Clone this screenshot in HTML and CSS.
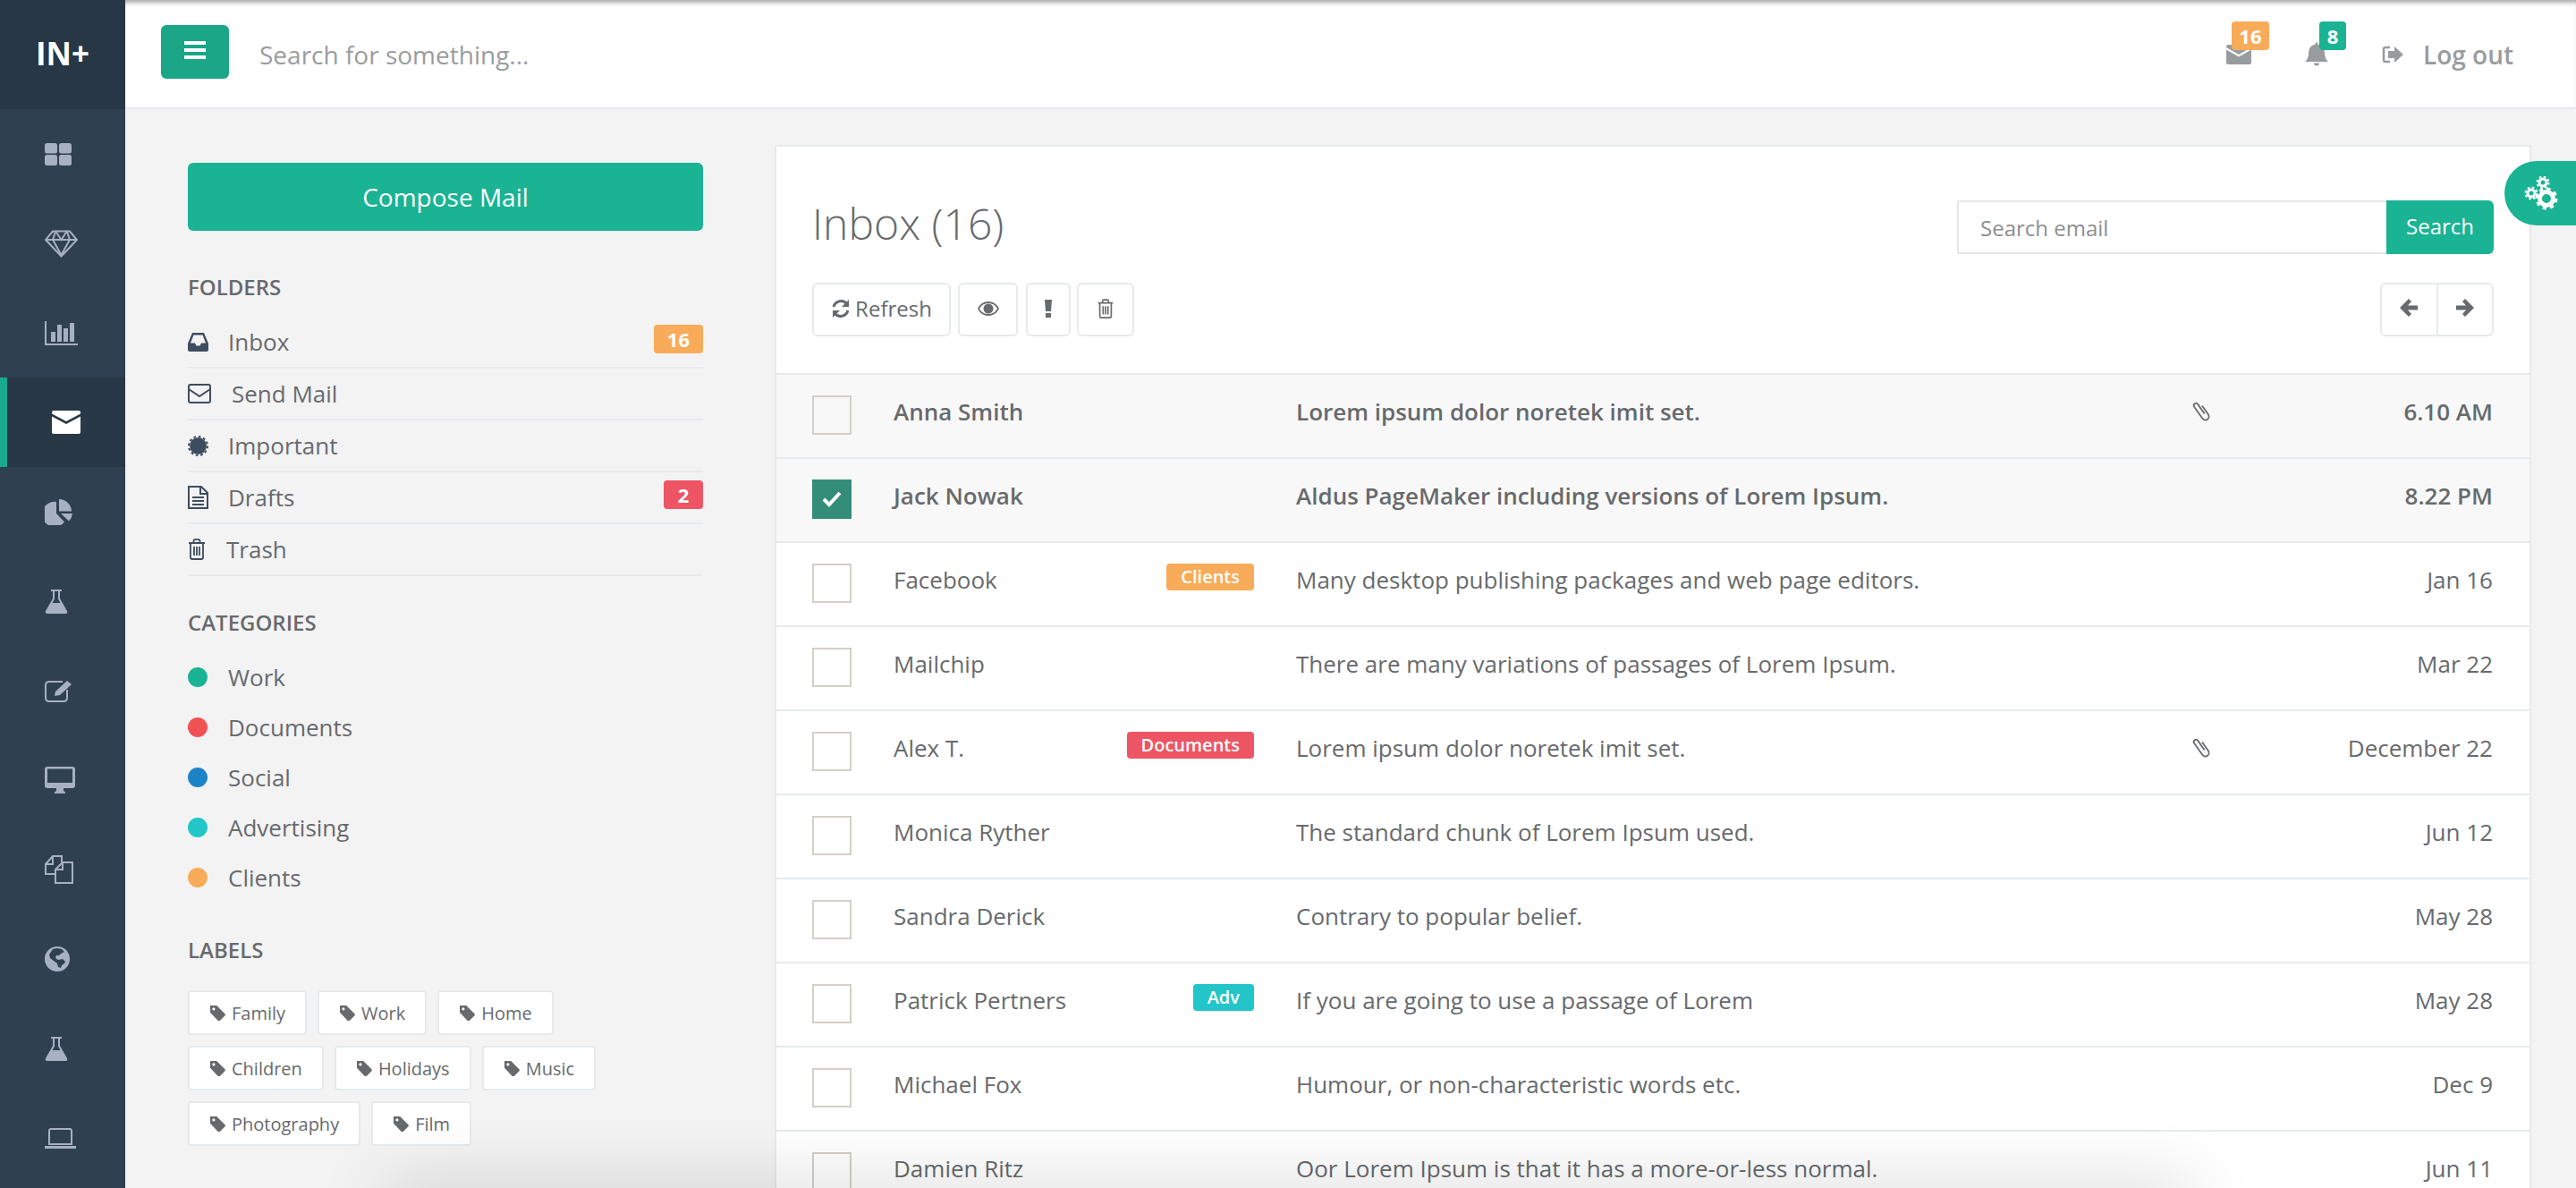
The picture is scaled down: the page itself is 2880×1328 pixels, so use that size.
FILE: index.html
```html
<!DOCTYPE html>
<html lang="en">

<head>
    <meta charset="UTF-8">
    <title>INSPINIA | Mailbox</title>
    <link rel="stylesheet" href="styles.css">
</head>

<body>
    <svg class="defs" width="0" height="0">
        <symbol id="i-tag" viewBox="1 1 16.500 16.500"><path d="M1 1h7l9 9a1.500 1.500 0 0 1 0 2l-5.500 5.500a1.500 1.500 0 0 1-2 0L1 8.500z M4.800 3.300a1.500 1.500 0 1 0 .01 0z" fill-rule="evenodd" fill="currentColor"/></symbol>
        <symbol id="i-trash" viewBox="0 0 20 24"><path d="M1 5h18M6.500 5V2.500q0-1.300 1.300-1.300h4.400q1.300 0 1.300 1.300V5M3 5v16q0 2 2 2h10q2 0 2-2V5M7 9v10M10 9v10M13 9v10" fill="none" stroke="currentColor" stroke-width="1.800"/></symbol>
        <symbol id="i-clip" viewBox="0 0 22 24"><path transform="rotate(-35 11 12)" d="M15 8V20a4 4 0 0 1-8 0V4a2.500 2.500 0 0 1 5 0V17" fill="none" stroke="currentColor" stroke-width="1.800"/></symbol>
        <symbol id="i-flask" viewBox="0 0 26 28"><path d="M7 1h12v2h-2v8l8 14q1 3-2 3H3q-3 0-2-3l8-14V3H7zM11 3v8.500L8.500 16h9L15 11.500V3z" fill-rule="evenodd" fill="currentColor"/></symbol>
    </svg>

    <nav class="sidebar">
        <div class="logo">IN+</div>
        <a class="nav-item"><svg class="ni" width="30" height="25" viewBox="0 0 30 25" fill="currentColor"><rect width="14" height="11.500" rx="2.500"/><rect x="16" width="14" height="11.500" rx="2.500"/><rect y="13" width="14" height="12" rx="2.500"/><rect x="16" y="13" width="14" height="12" rx="2.500"/></svg></a>
        <a class="nav-item"><svg class="ni" width="37" height="31" viewBox="0 0 37 31" fill="none" stroke="currentColor" stroke-width="2"><path d="M9 1.500h19l8 9.500-17.500 18.500L1 11zM1 11h35M12 2l-3 9 9.500 17M25 2l3 9-9.500 17M12.500 2 18.500 11 24.500 2"/></svg></a>
        <a class="nav-item"><svg class="ni" width="37" height="27" viewBox="0 0 37 27" fill="currentColor"><path d="M0 0h2v25h35v2H0z"/><rect x="7" y="12" width="5" height="11"/><rect x="14" y="4" width="5" height="19"/><rect x="21" y="8" width="5" height="15"/><rect x="28" y="2" width="5" height="21"/></svg></a>
        <a class="nav-item active"><svg width="32" height="26" viewBox="0 0 32 26" fill="currentColor"><path d="M2 0h28q2 0 2 2v1.500L16 12 0 3.500V2q0-2 2-2z"/><path d="M0 6.500 16 15 32 6.500V24q0 2-2 2H2q-2 0-2-2z"/></svg></a>
        <a class="nav-item"><svg class="ni" width="31" height="29" viewBox="0 0 31 29" fill="currentColor"><path d="M13 3v13l9 9.500A14 14 0 1 1 13 3z"/><path d="M16 0a14 14 0 0 1 14 13.500H16z"/><path d="M18 16h13a14 14 0 0 1-4 8.500z"/></svg></a>
        <a class="nav-item"><svg class="ni flask" width="26" height="28"><use href="#i-flask"/></svg></a>
        <a class="nav-item"><svg class="ni" width="32" height="25" viewBox="0 0 32 25" fill="none" stroke="currentColor" stroke-width="2"><path d="M25 11v9q0 4-4 4H5q-4 0-4-4V6q0-4 4-4h15"/><path d="M11 18l1-5L25 1l5 4-13 12z" fill="currentColor" stroke="none"/></svg></a>
        <a class="nav-item"><svg class="ni" width="34" height="30" viewBox="0 0 34 30" fill="currentColor"><path d="M3 0h28q3 0 3 3v18q0 3-3 3H21v3l2 1.500V30H11v-1.500l2-1.500v-3H3q-3 0-3-3V3q0-3 3-3zM3 2.500V18h28V2.500z" fill-rule="evenodd"/></svg></a>
        <a class="nav-item"><svg class="ni" width="32" height="32" viewBox="0 0 32 32" fill="none" stroke="currentColor" stroke-width="2"><path d="M12 21H1V10l8-9h10v7"/><path d="M9 1v9H1"/><path d="M20 8h11v23H12V16z"/><path d="M20 8v8h-8"/></svg></a>
        <a class="nav-item"><svg class="ni" width="28" height="28" viewBox="0 0 28 28"><circle cx="14" cy="14" r="14" fill="currentColor"/><path d="M9 3l5-1 5 1 3 3-4 2-2 2h-3l-1 3 3 2 5-1 3 3-1 2-3 2-1 3-3-1-1-4-4-3-4-3-1-4z" fill="#2f4050"/></svg></a>
        <a class="nav-item"><svg class="ni flask" width="26" height="28"><use href="#i-flask"/></svg></a>
        <a class="nav-item"><svg class="ni" width="35" height="23" viewBox="0 0 35 23" fill="none" stroke="currentColor" stroke-width="2"><path d="M5 18V3q0-2 2-2h21q2 0 2 2v15z"/><path d="M0 21.500h35" stroke-width="3"/></svg></a>
    </nav>

    <div class="main">
        <header class="topbar">
            <button class="menu-btn"><svg width="24" height="20" viewBox="0 0 24 20" fill="#fff"><rect width="24" height="4"/><rect y="8" width="24" height="4"/><rect y="16" width="24" height="4"/></svg></button>
            <div class="top-search">Search for something...</div>
            <div class="top-right">
                <span class="top-icon mail">
                    <svg width="28" height="22" viewBox="0 0 28 22" fill="currentColor"><path d="M2 0h24q2 0 2 2v1L14 11 0 3V2q0-2 2-2z"/><path d="M0 5.500 14 13.500 28 5.500V20q0 2-2 2H2q-2 0-2-2z"/></svg>
                    <b class="count orange">16</b>
                </span>
                <span class="top-icon bell">
                    <svg width="26" height="28" viewBox="0 0 26 28" fill="currentColor"><path d="M13 0q1.500 0 1.500 2.500Q22 4 22 12q0 7 4 10H0q4-3 4-10Q4 4 11.500 2.500 11.500 0 13 0zM10 23.500h6a3 3 0 0 1-6 0z"/></svg>
                    <b class="count green">8</b>
                </span>
                <span class="logout">
                    <svg width="24" height="20" viewBox="0 0 24 20" fill="currentColor"><path d="M9 2H4Q2 2 2 4v12q0 2 2 2h5" fill="none" stroke="currentColor" stroke-width="2.500"/><path d="M14 1l10 9-10 9v-5H7V6h7z"/></svg>
                    Log out
                </span>
            </div>
        </header>

        <div class="content">
            <aside class="mail-side">
                <button class="compose">Compose Mail</button>

                <h5 class="side-title first">FOLDERS</h5>
                <ul class="folders">
                    <li><svg class="fi" width="23" height="21" viewBox="0 0 23 21" fill="#3e4d5f"><path d="M5 0h13l5 12v7q0 2-2 2H2q-2 0-2-2v-7zM6.500 2.500 3 11.500h5l1.500 3h4l1.500-3h5L16.500 2.500z" fill-rule="evenodd"/></svg><span class="t1">Inbox</span><b class="badge orange">16</b></li>
                    <li><svg class="fi" width="26" height="22" viewBox="0 0 26 22" fill="none" stroke="#3e4d5f" stroke-width="2"><rect x="1" y="1" width="24" height="20" rx="2"/><path d="M1 6l12 8 12-8"/></svg><span class="t2">Send Mail</span></li>
                    <li><svg class="fi" width="23" height="23" viewBox="0 0 23 23" fill="#3e4d5f" stroke="#3e4d5f"><circle cx="11.500" cy="11.500" r="9.500" stroke="none"/><circle cx="11.500" cy="11.500" r="10.500" fill="none" stroke-width="2" stroke-dasharray="2.750"/></svg><span class="t1">Important</span></li>
                    <li><svg class="fi" width="23" height="26" viewBox="0 0 23 26" fill="none" stroke="#3e4d5f" stroke-width="2"><path d="M1 1h14l7 7v17H1zM14 1v8h8M5 13h13M5 17h13M5 21h13"/></svg><span class="t1">Drafts</span><b class="badge red">2</b></li>
                    <li><svg class="fi" width="20" height="24" viewBox="0 0 20 24" color="#3e4d5f"><use href="#i-trash"/></svg><span class="t3">Trash</span></li>
                </ul>

                <h5 class="side-title">CATEGORIES</h5>
                <ul class="cats">
                    <li><i class="dot navy"></i>Work</li>
                    <li><i class="dot red-dot"></i>Documents</li>
                    <li><i class="dot blue"></i>Social</li>
                    <li><i class="dot cyan"></i>Advertising</li>
                    <li><i class="dot amber"></i>Clients</li>
                </ul>

                <h5 class="side-title">LABELS</h5>
                <div class="tags">
                    <a class="tag"><svg width="17" height="17"><use href="#i-tag"/></svg>Family</a>
                    <a class="tag"><svg width="17" height="17"><use href="#i-tag"/></svg>Work</a>
                    <a class="tag"><svg width="17" height="17"><use href="#i-tag"/></svg>Home</a>
                    <a class="tag"><svg width="17" height="17"><use href="#i-tag"/></svg>Children</a>
                    <a class="tag"><svg width="17" height="17"><use href="#i-tag"/></svg>Holidays</a>
                    <a class="tag"><svg width="17" height="17"><use href="#i-tag"/></svg>Music</a>
                    <a class="tag"><svg width="17" height="17"><use href="#i-tag"/></svg>Photography</a>
                    <a class="tag"><svg width="17" height="17"><use href="#i-tag"/></svg>Film</a>
                </div>
            </aside>

            <section class="inbox">
                <div class="inbox-head">
                    <div class="head-row">
                        <h2>Inbox (16)</h2>
                        <div class="mail-search">
                            <div class="mail-input">Search email</div>
                            <button class="mail-btn">Search</button>
                        </div>
                    </div>
                    <div class="tools">
                        <button class="tool"><svg width="22" height="22" viewBox="0 0 22 22" fill="none" stroke="currentColor" stroke-width="3"><path d="M3 9a8.500 8.500 0 0 1 15-3M19 13a8.500 8.500 0 0 1-15 3"/><path d="M20 1v8h-8zM2 21v-8h8z" fill="currentColor" stroke="none"/></svg>Refresh</button>
                        <button class="tool eye"><svg width="24" height="16" viewBox="0 0 24 16"><path d="M12 0q8 0 12 8-4 8-12 8T0 8q4-8 12-8zM12 2Q5 2 2 8q3 6 10 6t10-6q-3-6-10-6z" fill="currentColor" fill-rule="evenodd"/><circle cx="12" cy="8" r="5.500" fill="currentColor"/></svg></button>
                        <button class="tool bang"><svg width="8" height="20" viewBox="0 0 8 20" fill="currentColor"><path d="M0 0h8L7 13H1z"/><rect x="1" y="15" width="6" height="5"/></svg></button>
                        <button class="tool bin"><svg width="20" height="22" viewBox="0 0 20 24"><use href="#i-trash"/></svg></button>
                        <div class="pager">
                            <button><svg width="20" height="20" viewBox="0 0 20 20" fill="currentColor"><path d="M10 0l3 3-4 4.500h11v5H9l4 4.500-3 3L0 10z"/></svg></button>
                            <button><svg width="20" height="20" viewBox="0 0 20 20" fill="currentColor"><path d="M10 0l-3 3 4 4.500H0v5h11l-4 4.500 3 3 10-10z"/></svg></button>
                        </div>
                    </div>
                </div>
                <div class="rows">
                    <div class="row unread">
                        <span class="check"></span><span class="from">Anna Smith</span><span class="lbl"></span>
                        <span class="subj">Lorem ipsum dolor noretek imit set.</span>
                        <svg class="clip" width="22" height="24"><use href="#i-clip"/></svg><span class="date">6.10 AM</span>
                    </div>
                    <div class="row unread">
                        <span class="check on"><svg width="22" height="18" viewBox="0 0 22 18" fill="none" stroke="#fff" stroke-width="4"><path d="M2 9l6 6L20 2"/></svg></span><span class="from">Jack Nowak</span><span class="lbl"></span>
                        <span class="subj">Aldus PageMaker including versions of Lorem Ipsum.</span>
                        <span class="date">8.22 PM</span>
                    </div>
                    <div class="row">
                        <span class="check"></span><span class="from">Facebook</span><span class="lbl"><b class="tagl orange">Clients</b></span>
                        <span class="subj">Many desktop publishing packages and web page editors.</span>
                        <span class="date">Jan 16</span>
                    </div>
                    <div class="row">
                        <span class="check"></span><span class="from">Mailchip</span><span class="lbl"></span>
                        <span class="subj">There are many variations of passages of Lorem Ipsum.</span>
                        <span class="date">Mar 22</span>
                    </div>
                    <div class="row">
                        <span class="check"></span><span class="from">Alex T.</span><span class="lbl"><b class="tagl red">Documents</b></span>
                        <span class="subj">Lorem ipsum dolor noretek imit set.</span>
                        <svg class="clip" width="22" height="24"><use href="#i-clip"/></svg><span class="date">December 22</span>
                    </div>
                    <div class="row">
                        <span class="check"></span><span class="from">Monica Ryther</span><span class="lbl"></span>
                        <span class="subj">The standard chunk of Lorem Ipsum used.</span>
                        <span class="date">Jun 12</span>
                    </div>
                    <div class="row">
                        <span class="check"></span><span class="from">Sandra Derick</span><span class="lbl"></span>
                        <span class="subj">Contrary to popular belief.</span>
                        <span class="date">May 28</span>
                    </div>
                    <div class="row">
                        <span class="check"></span><span class="from">Patrick Pertners</span><span class="lbl"><b class="tagl cyan-l">Adv</b></span>
                        <span class="subj">If you are going to use a passage of Lorem</span>
                        <span class="date">May 28</span>
                    </div>
                    <div class="row">
                        <span class="check"></span><span class="from">Michael Fox</span><span class="lbl"></span>
                        <span class="subj">Humour, or non-characteristic words etc.</span>
                        <span class="date">Dec 9</span>
                    </div>
                    <div class="row">
                        <span class="check"></span><span class="from">Damien Ritz</span><span class="lbl"></span>
                        <span class="subj">Oor Lorem Ipsum is that it has a more-or-less normal.</span>
                        <span class="date">Jun 11</span>
                    </div>
                </div>
            </section>
        </div>
    </div>

    <div class="gear-tab">
        <svg width="40" height="38" viewBox="0 0 40 38" fill="none" stroke="#fff">
            <circle cx="25" cy="25" r="7.500" stroke-width="5"/>
            <circle cx="25" cy="25" r="11" stroke-width="3" stroke-dasharray="4.320"/>
            <circle cx="21" cy="7" r="4" stroke-width="3"/>
            <circle cx="21" cy="7" r="6.500" stroke-width="2" stroke-dasharray="2.550"/>
            <circle cx="8" cy="19" r="4" stroke-width="3"/>
            <circle cx="8" cy="19" r="6.500" stroke-width="2" stroke-dasharray="2.550"/>
        </svg>
    </div>
    <div class="bottom-shade"></div>
</body>

</html>
```
FILE: styles.css
```css
* {
    box-sizing: border-box;
}

html,
body {
    height: 100%;
    margin: 0;
    overflow: hidden;
}

body {
    display: flex;
    background-color: #f3f3f4;
    color: #676a6c;
    font-family: "Open Sans", "Liberation Sans", sans-serif;
    font-size: 26px;
}

.defs {
    position: absolute;
}

button {
    font-family: inherit;
    border: none;
    padding: 0;
}

/* sidebar */
.sidebar {
    width: 140px;
    flex-shrink: 0;
    background-color: #2f4050;
    color: #a7b1c2;
}

.logo {
    height: 122px;
    padding-left: 40px;
    padding-top: 33px;
    background-color: #283745;
    color: #fff;
    font-size: 35px;
    font-weight: 700;
    line-height: 54px;
}

.nav-item {
    height: 100px;
    display: flex;
    align-items: center;
    padding-left: 50px;
}

.nav-item.active {
    background-color: #293846;
    border-left: 8px solid #19aa8d;
    color: #fff;
}

/* top bar */
.main {
    flex: 1;
    min-width: 0;
}

.topbar {
    height: 122px;
    display: flex;
    align-items: center;
    padding: 0 70px 4px 40px;
    background-color: #fff;
    border-bottom: 2px solid #e7eaec;
    box-shadow: inset 0 6px 5px -3px #aaa;
}

.menu-btn {
    width: 76px;
    height: 60px;
    background-color: #1aa687;
    border-radius: 6px;
}

.top-search {
    margin-left: 34px;
    margin-top: 5px;
    color: #999c9e;
    font-size: 28px;
}

.top-right {
    margin-left: auto;
    margin-top: 5px;
    display: flex;
    align-items: center;
    color: #999c9e;
}

.top-icon {
    position: relative;
    display: flex;
}

.mail {
    margin-right: 60px;
}

.bell {
    margin-right: 60px;
}

.count {
    position: absolute;
    top: -26px;
    height: 32px;
    border-radius: 4px;
    color: #fff;
    font-size: 22px;
    font-weight: 700;
    line-height: 32px;
    text-align: center;
}

.mail .count {
    left: 6px;
    width: 42px;
}

.bell .count {
    top: -23px;
    left: 16px;
    width: 30px;
}

.logout {
    display: flex;
    align-items: center;
    gap: 22px;
    font-size: 28px;
    font-weight: 600;
}

.orange {
    background-color: #f8ac59;
}

.green {
    background-color: #1ab394;
}

.red {
    background-color: #ed5565;
}

/* content */
.content {
    display: flex;
    align-items: flex-start;
    padding: 40px 50px 0 70px;
}

.mail-side {
    width: 576px;
    flex-shrink: 0;
}

.compose {
    display: block;
    width: 100%;
    height: 76px;
    margin-top: 20px;
    background-color: #1ab394;
    border-radius: 6px;
    color: #fff;
    font-size: 28px;
    font-weight: 500;
}

.side-title {
    margin: 0;
    font-size: 24px;
    font-weight: 600;
    line-height: 34px;
    height: 34px;
}

.first {
    margin-top: 46px;
}

.folders,
.cats {
    list-style: none;
    margin: 0;
    padding: 0;
}

.folders {
    margin-top: 16px;
    margin-bottom: 35px;
}

.folders li {
    display: flex;
    align-items: center;
    height: 58px;
    border-bottom: 2px solid #e7eaec;
    line-height: 36px;
}

.fi {
    flex-shrink: 0;
}

.t1 {
    margin-left: 22px;
}

.t2 {
    margin-left: 23px;
}

.t3 {
    margin-left: 23px;
}

.badge {
    margin-left: auto;
    margin-top: -6px;
    height: 32px;
    min-width: 44px;
    padding: 0 15px;
    border-radius: 4px;
    color: #fff;
    font-size: 22px;
    font-weight: 700;
    line-height: 32px;
    text-align: center;
}

.cats {
    margin-top: 16px;
    margin-bottom: 36px;
}

.cats li {
    display: flex;
    align-items: center;
    height: 56px;
}

.dot {
    width: 22px;
    height: 22px;
    border-radius: 50%;
    margin-right: 23px;
}

.navy {
    background-color: #1ab394;
}

.red-dot {
    background-color: #f15354;
}

.blue {
    background-color: #1c84c6;
}

.cyan {
    background-color: #23c6c8;
}

.amber {
    background-color: #f8ac59;
}

.tags {
    display: flex;
    flex-wrap: wrap;
    gap: 12px;
    width: 480px;
    margin-top: 28px;
}

.tag {
    display: inline-flex;
    align-items: center;
    height: 50px;
    gap: 7px;
    padding: 0 22px 0 23px;
    background-color: #fff;
    border: 2px solid #e7eaec;
    border-radius: 4px;
    font-size: 20px;
}

/* mailbox */
.inbox {
    flex: 1;
    min-width: 0;
    margin-left: 80px;
    background-color: #fff;
    border: 2px solid #e7eaec;
    border-bottom: none;
}

.inbox-head {
    height: 253px;
    padding: 0 40px;
}

.head-row {
    display: flex;
    align-items: flex-start;
    justify-content: space-between;
    height: 152px;
}

h2 {
    margin: 53px 0 0;
    font-size: 48px;
    font-weight: 300;
    line-height: 66px;
}

.mail-search {
    display: flex;
    margin-top: 60px;
}

.mail-input {
    width: 480px;
    height: 60px;
    padding-left: 24px;
    border: 2px solid #e5e6e7;
    border-right: none;
    border-radius: 2px 0 0 2px;
    color: #8e8e8e;
    font-size: 24px;
    line-height: 58px;
}

.mail-btn {
    width: 120px;
    height: 60px;
    padding-bottom: 4px;
    background-color: #1ab394;
    border-radius: 0 6px 6px 0;
    color: #fff;
    font-size: 24px;
    font-weight: 500;
}

.tools {
    display: flex;
    height: 60px;
    color: #676a6c;
}

.tool,
.pager {
    display: flex;
    align-items: center;
    justify-content: center;
    height: 60px;
    background-color: #fff;
    border: 2px solid #e7eaec;
    border-radius: 6px;
    color: #676a6c;
}

.tool {
    gap: 5px;
    width: 155px;
    margin-right: 8px;
    padding-bottom: 3px;
    font-size: 24px;
}

.tool.eye {
    width: 67px;
    margin-right: 9px;
}

.tool.bang {
    width: 50px;
    margin-right: 7px;
}

.tool.bin {
    width: 64px;
    margin-right: 0;
}

.pager {
    margin-left: auto;
    width: 127px;
}

.pager button {
    flex: 1;
    height: 100%;
    background: none;
    color: #676a6c;
}

.pager button + button {
    border-left: 2px solid #e7eaec;
}

.row {
    position: relative;
    display: flex;
    align-items: center;
    height: 94px;
    padding: 0 41px 0 40px;
    border-top: 2px solid #e7eaec;
    font-size: 26px;
}

.unread {
    background-color: #f9f8f8;
    font-weight: 600;
}

.check {
    display: flex;
    align-items: center;
    justify-content: center;
    width: 44px;
    height: 44px;
    margin-bottom: 2px;
    background-color: #fff;
    border: 2px solid #d3cfc9;
    flex-shrink: 0;
}

.unread .check {
    background-color: #f9f8f8;
}

.check.on {
    background-color: #348d77;
    border-color: #348d77;
}

.from,
.subj,
.date {
    padding-bottom: 11px;
}

.from {
    width: 260px;
    margin-left: 47px;
    flex-shrink: 0;
}

.lbl {
    width: 143px;
    display: flex;
    justify-content: flex-end;
    padding-bottom: 16px;
    margin-right: 47px;
    flex-shrink: 0;
}

.tagl {
    height: 30px;
    padding: 0 16px;
    border-radius: 4px;
    color: #fff;
    font-size: 20px;
    font-weight: 600;
    line-height: 30px;
}

.cyan-l {
    background-color: #23c6c8;
}

.subj {
    flex: 1;
}

.clip {
    position: absolute;
    left: 1582px;
    top: 28px;
    color: #676a6c;
}

.date {
    text-align: right;
}

/* settings tab and window shadow */
.gear-tab {
    position: absolute;
    top: 180px;
    right: 0;
    width: 80px;
    height: 72px;
    display: flex;
    align-items: center;
    padding-left: 22px;
    background-color: #1ab394;
    border-radius: 40px 0 0 40px;
}

.bottom-shade {
    position: absolute;
    top: 1328px;
    left: 430px;
    right: 430px;
    height: 40px;
    box-shadow: 0 0 80px rgba(0, 0, 0, 0.2);
    pointer-events: none;
}
```
